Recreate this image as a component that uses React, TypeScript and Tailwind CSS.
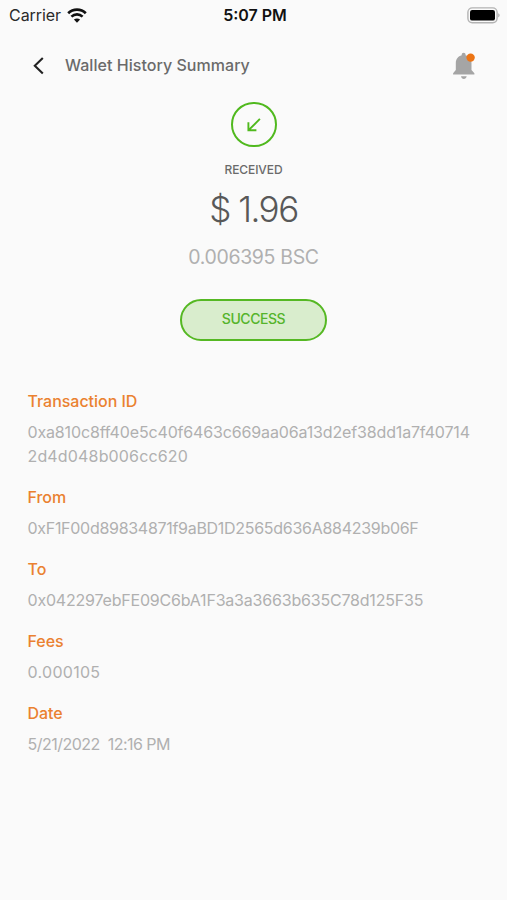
type Detail = {
  label: string;
  lines: { text: string; tracking: string }[];
};

const DETAILS: Detail[] = [
  {
    label: "Transaction ID",
    lines: [
      { text: "0xa810c8ff40e5c40f6463c669aa06a13d2ef38dd1a7f40714", tracking: "tracking-[-0.15px]" },
      { text: "2d4d048b006cc620", tracking: "tracking-[0.16px]" },
    ],
  },
  {
    label: "From",
    lines: [{ text: "0xF1F00d89834871f9aBD1D2565d636A884239b06F", tracking: "tracking-[-0.29px]" }],
  },
  {
    label: "To",
    lines: [{ text: "0x042297ebFE09C6bA1F3a3a3663b635C78d125F35", tracking: "tracking-[-0.2px]" }],
  },
  { label: "Fees", lines: [{ text: "0.000105", tracking: "tracking-[0.3px]" }] },
  { label: "Date", lines: [{ text: "5/21/2022  12:16 PM", tracking: "tracking-[-0.52px]" }] },
];

function WifiIcon() {
  return (
    <svg width="20" height="15" viewBox="0 0 20 15" fill="none" className="ml-[6px]">
      <path d="M1.2 5.2C6.1 0.5 13.9 0.5 18.8 5.2" stroke="#111" strokeWidth="2.7" />
      <path d="M4.4 8.6C7.6 5.6 12.4 5.6 15.6 8.6" stroke="#111" strokeWidth="2.6" />
      <path d="M10 14.8L6.9 11.6C8.6 10 11.4 10 13.1 11.6Z" fill="#111" />
    </svg>
  );
}

function BatteryIcon() {
  return (
    <svg width="34" height="17" viewBox="0 0 34 17" fill="none">
      <rect x="0.9" y="0.9" width="29.2" height="14.8" rx="4.4" stroke="#b3b3b3" strokeWidth="1.4" />
      <rect x="3" y="3" width="25" height="10.6" rx="2.2" fill="#000" />
      <path d="M31.3 6.2C33 6.8 33 9.8 31.3 10.4Z" fill="#a3a3a3" />
    </svg>
  );
}

function BellIcon() {
  return (
    <svg width="24" height="28" viewBox="0 0 24 28">
      <path
        d="M11.6 0.8C10.5 0.8 9.7 1.6 9.7 2.7V3.3C6.2 4.2 3.8 7.2 3.8 11V18L1.1 21.2V22.5H22.4V21.2L19.5 18V11C19.5 7.2 17.1 4.2 13.6 3.3V2.7C13.6 1.6 12.8 0.8 11.6 0.8Z"
        fill="#a5a5a5"
      />
      <path d="M9 24.2H14.7C14.2 26 13.3 26.9 11.8 26.9C10.4 26.9 9.4 26 9 24.2Z" fill="#a5a5a5" />
      <circle cx="18.6" cy="5.6" r="4.2" fill="#ec7415" />
    </svg>
  );
}

function StatusBar() {
  return (
    <div className="grid h-[30px] grid-cols-3 items-center pl-[9px] pr-[6px] text-base text-[#111]">
      <div className="flex items-center">
        <span className="tracking-[-0.05px] text-[#2a2a2a]">Carrier</span>
        <WifiIcon />
      </div>
      <div className="text-center font-semibold">5:07 PM</div>
      <div className="flex justify-end">
        <BatteryIcon />
      </div>
    </div>
  );
}

function Header() {
  return (
    <header className="flex h-[72px] items-center pl-[33px] pr-[31px]">
      <button type="button" aria-label="Back">
        <svg width="12" height="18" viewBox="0 0 12 18" fill="none">
          <path d="M9.8 1L1.8 8.8L9.8 16.6" stroke="#222" strokeWidth="2.1" />
        </svg>
      </button>
      <h1 className="ml-5 flex-1 pb-0.5 text-base font-medium tracking-[0.04px] text-[#6a6a6a]">
        Wallet History Summary
      </h1>
      <BellIcon />
    </header>
  );
}

export default function App() {
  return (
    <div className="h-[900px] w-[507px] overflow-hidden bg-[#fafafa] font-['Inter',sans-serif]">
      <StatusBar />
      <Header />

      <section className="flex flex-col items-center">
        <div className="grid h-[45px] w-[46px] place-items-center rounded-full border-2 border-[#50b91e]">
          <svg width="14" height="14" viewBox="0 0 14 14" fill="none">
            <path d="M12.9 0.9L1.6 12.2M1.4 4.2V12.2H9.4" stroke="#50b91e" strokeWidth="1.9" />
          </svg>
        </div>
        <p className="mt-[15px] text-xs leading-4 font-medium tracking-[-0.1px] text-[#6a6a6a]">RECEIVED</p>
        <p className="mt-[9px] text-[35px] leading-[44px] font-light tracking-[-1.5px] text-[#585858]">$ 1.96</p>
        <p className="mt-[14px] text-[19.5px] leading-6 tracking-[-0.35px] text-[#b0b0b0]">0.006395 BSC</p>
        <div className="mt-[30px] flex h-[42px] w-[147px] items-center justify-center rounded-full border-2 border-[#55b823] bg-[#d9edcd] pb-0.5 text-sm font-medium tracking-[-0.45px] text-[#55b42b]">
          SUCCESS
        </div>
      </section>

      <dl className="mt-12 flex flex-col gap-[17px] pl-[27.5px] text-base leading-6">
        {DETAILS.map((d) => (
          <div key={d.label} className="flex flex-col gap-[7px]">
            <dt className="font-medium tracking-[-0.03px] text-[#ea8130]">{d.label}</dt>
            <dd className="whitespace-pre text-[#b0b0b0]">
              {d.lines.map((line) => (
                <div key={line.text} className={line.tracking}>
                  {line.text}
                </div>
              ))}
            </dd>
          </div>
        ))}
      </dl>
    </div>
  );
}
